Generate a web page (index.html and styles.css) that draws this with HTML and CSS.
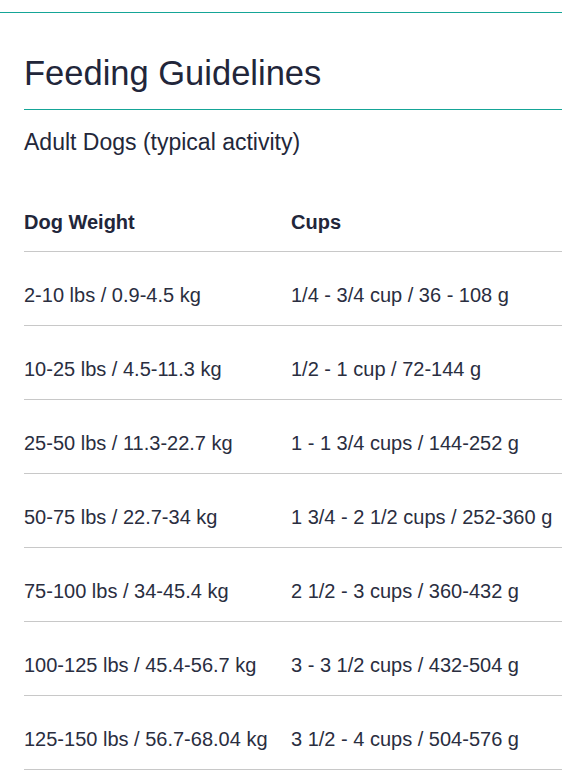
FILE: index.html
```html
<!DOCTYPE html>
<html lang="en">
<head>
<meta charset="utf-8">
<title>Feeding Guidelines</title>
<link rel="stylesheet" href="styles.css">
</head>
<body>
<section class="feeding">
  <h1 class="feeding__title">Feeding Guidelines</h1>
  <h2 class="feeding__subtitle">Adult Dogs (typical activity)</h2>
  <table class="feeding__table">
    <colgroup>
      <col class="feeding__col-weight">
      <col>
    </colgroup>
    <thead>
      <tr><th>Dog Weight</th><th>Cups</th></tr>
    </thead>
    <tbody>
      <tr><td>2-10 lbs / 0.9-4.5 kg</td><td>1/4 - 3/4 cup / 36 - 108 g</td></tr>
      <tr><td>10-25 lbs / 4.5-11.3 kg</td><td>1/2 - 1 cup / 72-144 g</td></tr>
      <tr><td>25-50 lbs / 11.3-22.7 kg</td><td>1 - 1 3/4 cups / 144-252 g</td></tr>
      <tr><td>50-75 lbs / 22.7-34 kg</td><td>1 3/4 - 2 1/2 cups / 252-360 g</td></tr>
      <tr><td>75-100 lbs / 34-45.4 kg</td><td>2 1/2 - 3 cups / 360-432 g</td></tr>
      <tr><td>100-125 lbs / 45.4-56.7 kg</td><td>3 - 3 1/2 cups / 432-504 g</td></tr>
      <tr><td>125-150 lbs / 56.7-68.04 kg</td><td>3 1/2 - 4 cups / 504-576 g</td></tr>
    </tbody>
  </table>
</section>
</body>
</html>
```
FILE: styles.css
```css
html, body {
  margin: 0;
  padding: 0;
  background: #ffffff;
}

body {
  font-family: "Liberation Sans", Arial, sans-serif;
  color: #23273a;
  overflow: hidden;
}

.feeding {
  margin-top: 12px;
  border-top: 1px solid #15a597;
  padding-left: 24px;
}

.feeding__title {
  margin: 0;
  padding: 40px 0 16px;
  font-size: 34.5px;
  line-height: 40px;
  font-weight: 400;
  color: #22263a;
  border-bottom: 1px solid #15a597;
}

.feeding__subtitle {
  margin: 19px 0 0;
  font-size: 23px;
  line-height: 27px;
  font-weight: 400;
  color: #23273a;
}

.feeding__table {
  margin-top: 37px;
  width: 538px;
  border-collapse: collapse;
  table-layout: fixed;
  font-size: 20px;
  line-height: 23px;
}

.feeding__col-weight {
  width: 267px;
}

.feeding__table th {
  text-align: left;
  font-weight: 700;
  padding: 18px 0 17px;
  border-bottom: 1px solid #c8c8c8;
  color: #22263a;
}

.feeding__table td {
  padding: 32px 0 18px;
  border-bottom: 1px solid #c8c8c8;
  white-space: nowrap;
  color: #2a2e3f;
}
```
